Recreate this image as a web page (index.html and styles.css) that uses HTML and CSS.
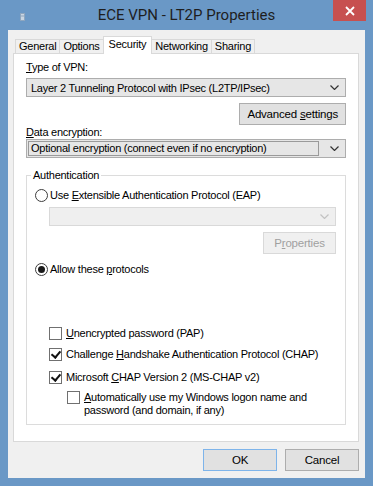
FILE: index.html
```html
<!DOCTYPE html>
<html lang="en">
<head>
    <meta charset="UTF-8">
    <title>ECE VPN - LT2P Properties</title>
    <link rel="stylesheet" href="styles.css">
</head>
<body>

    <div class="window">
        <!-- Title bar -->
        <div class="titlebar">
            <span class="app-icon">
                <svg width="5" height="8" viewBox="0 0 5 8"><rect x="0.5" y="0.5" width="4" height="7" fill="#c9d6e3" stroke="#8ea6bf"/><line x1="1" y1="3" x2="4" y2="3" stroke="#8ea6bf"/></svg>
            </span>
            <span class="title">ECE VPN - LT2P Properties</span>
            <button class="close" type="button">
                <svg width="10" height="10" viewBox="0 0 10 10"><path d="M1 1L9 9M9 1L1 9" stroke="#fff" stroke-width="1.8"/></svg>
            </button>
        </div>

        <div class="client">
            <!-- Tabs -->
            <div class="tabs">
                <span class="tab">General</span>
                <span class="tab">Options</span>
                <span class="tab active">Security</span>
                <span class="tab">Networking</span>
                <span class="tab">Sharing</span>
            </div>

            <div class="panel">
                <label class="field-label"><u>T</u>ype of VPN:</label>
                <div class="select">
                    <span class="select-text">Layer 2 Tunneling Protocol with IPsec (L2TP/IPsec)</span>
                    <svg class="arrow" width="9" height="5" viewBox="0 0 9 5"><path d="M0.5 0.5L4.5 4.5L8.5 0.5" fill="none" stroke="#333" stroke-width="1.2"/></svg>
                </div>
                <div class="button-row">
                    <button class="btn" type="button">Advanced <u>s</u>ettings</button>
                </div>

                <label class="field-label data"><u>D</u>ata encryption:</label>
                <div class="select combo">
                    <span class="select-text">Optional encryption (connect even if no encryption)</span>
                    <svg class="arrow" width="9" height="5" viewBox="0 0 9 5"><path d="M0.5 0.5L4.5 4.5L8.5 0.5" fill="none" stroke="#333" stroke-width="1.2"/></svg>
                </div>

                <!-- Authentication -->
                <fieldset class="group">
                    <legend>Authentication</legend>

                    <div class="option">
                        <span class="radio"></span>
                        <span>Use <u>E</u>xtensible Authentication Protocol (EAP)</span>
                    </div>
                    <div class="select disabled indent">
                        <span class="select-text"></span>
                        <svg class="arrow" width="9" height="5" viewBox="0 0 9 5"><path d="M0.5 0.5L4.5 4.5L8.5 0.5" fill="none" stroke="#c2c2c2" stroke-width="1.2"/></svg>
                    </div>
                    <div class="button-row">
                        <button class="btn disabled" type="button">P<u>r</u>operties</button>
                    </div>

                    <div class="option allow">
                        <span class="radio checked"></span>
                        <span>Allow these <u>p</u>rotocols</span>
                    </div>

                    <div class="check first">
                        <span class="box"></span>
                        <span><u>U</u>nencrypted password (PAP)</span>
                    </div>
                    <div class="check">
                        <span class="box checked"></span>
                        <span>Challenge <u>H</u>andshake Authentication Protocol (CHAP)</span>
                    </div>
                    <div class="check ms">
                        <span class="box checked"></span>
                        <span>Microsoft <u>C</u>HAP Version 2 (MS-CHAP v2)</span>
                    </div>
                    <div class="check sub">
                        <span class="box"></span>
                        <p class="check-text"><u>A</u>utomatically use my Windows logon name and<br>password (and domain, if any)</p>
                    </div>
                </fieldset>
            </div>

            <div class="footer">
                <button class="btn wide default" type="button">OK</button>
                <button class="btn wide" type="button">Cancel</button>
            </div>
        </div>
    </div>

</body>
</html>
```
FILE: styles.css
```css
/* General */
* {
    margin: 0;
    padding: 0;
    box-sizing: border-box;
}

body {
    font-family: 'Liberation Sans', Arial, sans-serif;
    font-size: 11px;
    letter-spacing: -0.25px;
    color: #000;
}

u {
    text-decoration-thickness: 1px;
    text-underline-offset: 1px;
}

/* Window frame */
.window {
    width: 373px;
    height: 486px;
    background-color: #6a98c6;
    padding: 0 8px 8px 8px;
    display: flex;
    flex-direction: column;
}

.titlebar {
    height: 30px;
    display: grid;
    grid-template-columns: 1fr auto 1fr;
    align-items: start;
}

.app-icon {
    padding: 13px 0 0 12px;
    line-height: 0;
}

.title {
    font-family: Roboto, 'Liberation Sans', sans-serif;
    font-size: 15px;
    letter-spacing: 0;
    color: #1e1e1e;
    line-height: 30px;
}

.close {
    justify-self: end;
    width: 33px;
    height: 21px;
    background-color: #c75050;
    border: none;
    display: flex;
    align-items: center;
    justify-content: center;
    margin-right: -1px;
}

/* Client area */
.client {
    flex: 1;
    background-color: #f0f0f0;
    padding: 6px 6px 0 5px;
    display: flex;
    flex-direction: column;
}

/* Tabs */
.tabs {
    display: flex;
    align-items: flex-end;
    height: 17px;
    padding-left: 2px;
}

.tab {
    height: 14px;
    line-height: 12px;
    padding: 0 3px;
    border: 1px solid #d9d9d9;
    border-bottom: none;
    border-left: none;
    background-color: #f0f0f0;
}

.tab:first-child {
    border-left: 1px solid #d9d9d9;
}

.tab.active {
    height: 18px;
    line-height: 15px;
    background-color: #fff;
    margin-bottom: -1px;
    border-left: 1px solid #d9d9d9;
    margin-left: -1px;
    padding: 0 5px;
    position: relative;
    z-index: 1;
}

.panel {
    height: 389px;
    background-color: #fff;
    border: 1px solid #d9d9d9;
    padding: 6px 12px 0 12px;
    display: flex;
    flex-direction: column;
}

.field-label {
    display: block;
    line-height: 15px;
}

.field-label.data {
    line-height: 14px;
}

/* Dropdowns */
.select {
    height: 19px;
    margin-top: 3px;
    background-color: #e6e6e6;
    border: 1px solid #adadad;
    display: flex;
    align-items: center;
    padding: 0 6px 0 4px;
}

.select-text {
    flex: 1;
    white-space: nowrap;
}

.select.combo {
    margin-top: 0;
    padding: 1px 6px 1px 1px;
}

.select.combo .select-text {
    height: 100%;
    border: 1px solid #9a9a9a;
    padding-left: 2px;
    line-height: 13px;
    margin-right: 11px;
}

.select.disabled {
    background-color: #efefef;
    border-color: #d9d9d9;
    margin-top: 4px;
}

.select.indent {
    margin-left: 14px;
}

/* Buttons */
.button-row {
    display: flex;
    justify-content: flex-end;
    margin-top: 6px;
}

.btn {
    height: 22px;
    padding: 0 7px;
    background-color: #e1e1e1;
    border: 1px solid #adadad;
    font-family: inherit;
    font-size: 11.5px;
    letter-spacing: -0.2px;
    color: #000;
}

.btn.disabled {
    width: 73px;
    background-color: #f0f0f0;
    border-color: #d9d9d9;
    color: #a0a0a0;
}

.btn.wide {
    width: 74px;
}

.btn.default {
    border-color: #7eb4ea;
}

/* Group box */
.group {
    margin-top: 10px;
    height: 257px;
    border: 1px solid #dcdcdc;
    padding: 0 9px 0 8px;
}

.group legend {
    line-height: 15px;
    padding: 0 2px;
    margin-left: -4px;
}

.option {
    display: flex;
    align-items: center;
    gap: 2px;
    line-height: 15px;
    margin-top: 5px;
}

.option.allow {
    margin-top: 8px;
}

.radio {
    width: 13px;
    height: 13px;
    border: 1px solid #3d3d3d;
    border-radius: 50%;
    background-color: #fff;
    display: flex;
    align-items: center;
    justify-content: center;
}

.radio.checked::after {
    content: "";
    width: 7px;
    height: 7px;
    border-radius: 50%;
    background-color: #1a1a1a;
}

.check {
    display: flex;
    align-items: flex-start;
    gap: 4px;
    line-height: 15px;
    margin-left: 14px;
    margin-top: 6px;
}

.check.first {
    margin-top: 49px;
}

.check.ms {
    margin-top: 8px;
}

.check.sub {
    margin-left: 32px;
    margin-top: 6px;
}

.check-text {
    line-height: 13px;
}

.box {
    flex: none;
    width: 13px;
    height: 13px;
    margin-top: 1px;
    border: 1px solid #707070;
    background-color: #fff;
    position: relative;
}

.check.sub .box {
    margin-top: 0;
}

.box.checked::after {
    content: "";
    position: absolute;
    left: 3px;
    top: 0px;
    width: 4px;
    height: 7px;
    border: solid #111;
    border-width: 0 2px 2px 0;
    transform: rotate(40deg);
}

/* Footer */
.footer {
    display: flex;
    justify-content: flex-end;
    gap: 8px;
    margin-top: 7px;
}
```
